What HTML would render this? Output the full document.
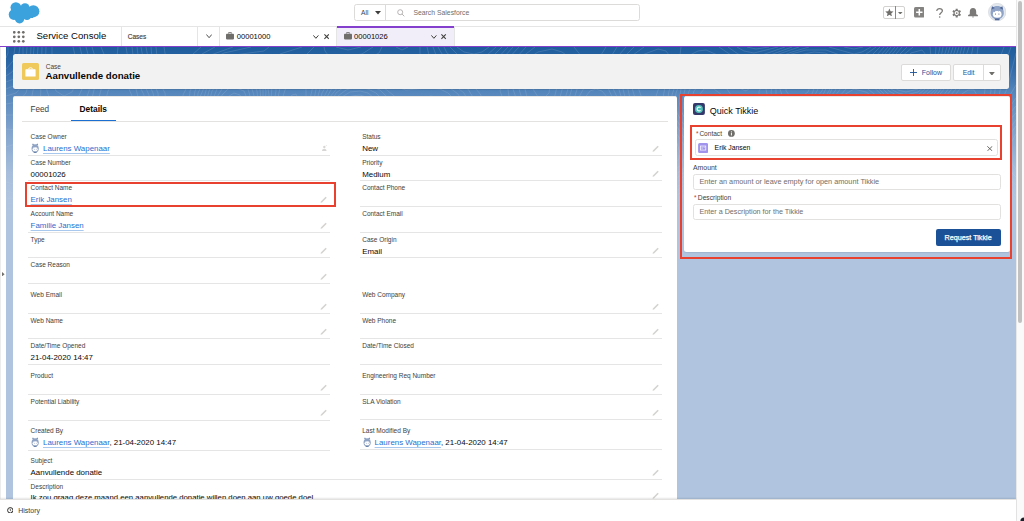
<!DOCTYPE html><html><head><meta charset="utf-8"><style>
html,body{margin:0;padding:0;}
body{width:1024px;height:521px;overflow:hidden;position:relative;background:#fff;font-family:"Liberation Sans",sans-serif;}
.b{position:absolute;}
.t{position:absolute;white-space:nowrap;}
</style></head><body>
<div class="b" style="left:6px;top:47px;width:1010px;height:452px;background:linear-gradient(to bottom,#1e5d9d 0px,#2f69a8 20px,#5586bb 45px,#82a4cd 85px,#a6bddb 125px,#b0c4df 150px,#b0c4df 452px);"></div>
<svg class="b" style="left:6px;top:47px" width="1010" height="220" viewBox="0 0 1010 220"><defs><linearGradient id="cg" x1="0" y1="0" x2="0" y2="1"><stop offset="0" stop-color="#fff" stop-opacity="1"/><stop offset="0.45" stop-color="#fff" stop-opacity="0.6"/><stop offset="1" stop-color="#fff" stop-opacity="0"/></linearGradient><mask id="cm"><rect width="1010" height="220" fill="url(#cg)"/></mask></defs><g mask="url(#cm)" fill="none" stroke="#ffffff" stroke-opacity="0.2" stroke-width="0.7"><path d="M907 28 914 23 919 16 920 8 916 3 905 6 896 17 895 22 898 27 902 29 907 28"/><path d="M792 42 795 40 794 38 791 40 792 42"/><path d="M841 152 846 148 848 142 844 138 836 138 830 144 830 150 834 153 841 152"/><path d="M711 164 718 160 718 155 714 154 708 158 706 162 711 164"/><path d="M907 0 895 10 890 20 892 28 900 34 910 32 920 22 925 10 924 0"/><path d="M795 50 802 45 805 38 803 32 798 30 787 32 780 40 780 44 784 49 790 51 795 50"/><path d="M159 118 160 114 158 113 154 118 156 120 159 118"/><path d="M840 158 850 152 854 144 852 136 842 132 829 136 824 142 822 148 824 154 828 158 840 158"/><path d="M711 172 720 167 728 160 730 154 726 148 720 146 712 147 704 151 697 158 695 164 696 170 702 173 711 172"/><path d="M451 0 458 5 468 7 476 5 483 0"/><path d="M901 0 889 12 886 24 891 34 902 38 912 35 922 25 929 12 930 0"/><path d="M797 54 806 47 810 36 807 28 798 25 790 26 783 30 776 36 774 42 776 48 782 53 790 55 797 54"/><path d="M157 130 166 123 170 114 170 106 164 100 158 101 152 105 144 118 143 124 146 130 152 132 157 130"/><path d="M840 162 854 154 859 144 857 134 851 130 844 128 834 129 826 133 820 140 817 148 819 156 824 161 832 163 840 162"/><path d="M706 178 720 172 732 162 736 152 731 144 722 140 712 142 700 148 690 158 687 166 690 174 696 178 706 178"/><path d="M444 0 452 8 468 12 480 9 490 0"/><path d="M896 0 884 14 882 26 885 32 890 38 902 42 914 37 924 27 931 14 934 0"/><path d="M796 58 808 50 814 38 813 28 804 22 794 22 783 26 775 32 770 40 770 48 776 55 786 59 796 58"/><path d="M157 136 168 127 175 114 175 102 172 96 168 94 160 94 152 99 143 108 138 118 138 128 142 135 148 138 157 136"/><path d="M838 166 854 158 863 146 864 140 862 134 858 130 850 126 838 125 828 128 820 134 814 144 813 154 818 162 826 166 838 166"/><path d="M707 182 726 172 738 160 741 150 738 144 734 140 722 136 710 138 696 146 684 158 681 168 686 178 696 183 707 182"/><path d="M438 0 441 6 448 11 460 15 470 17 484 12 496 0"/><path d="M892 0 881 14 878 26 880 32 886 39 892 43 900 45 912 42 924 31 934 16 937 0"/><path d="M791 62 804 58 816 44 819 36 818 30 815 24 810 20 798 19 786 21 775 28 766 38 765 46 769 54 779 60 791 62"/><path d="M154 142 162 138 170 131 180 114 180 104 178 96 174 90 168 87 160 88 148 97 138 109 133 120 133 130 137 138 146 143 154 142"/><path d="M277 112 282 107 286 98 286 90 284 86 278 91 272 106 272 112 274 114 277 112"/><path d="M833 170 852 163 866 150 868 142 868 136 864 130 859 126 846 122 832 123 820 130 812 140 808 152 812 162 822 169 833 170"/><path d="M705 186 728 174 743 160 745 154 745 148 742 142 735 136 722 132 708 135 691 146 677 160 675 170 682 181 692 187 705 186"/><path d="M250 212 253 206 250 202 246 204 243 210 244 213 250 212"/><path d="M158 0 160 12 164 16 170 18 178 15 195 0"/><path d="M432 0 436 7 444 13 458 19 472 21 480 20 487 16 502 0"/><path d="M889 0 877 14 875 22 875 28 879 36 885 42 892 46 900 48 912 45 926 33 936 16 941 0"/><path d="M797 64 805 60 812 54 818 46 822 36 822 30 820 24 816 20 808 16 794 16 779 22 766 32 760 42 762 52 771 60 784 65 797 64"/><path d="M709 64 716 56 716 48 708 42 698 42 692 50 693 60 700 65 709 64"/><path d="M264 138 282 120 291 104 293 84 291 74 288 67 284 67 278 76 261 116 258 134 260 139 264 138"/><path d="M155 146 164 141 173 132 180 123 184 114 184 104 182 95 176 85 170 81 160 83 148 92 134 108 128 120 129 132 135 142 144 147 155 146"/><path d="M486 104 493 100 496 94 494 88 490 86 486 86 480 90 475 100 478 105 486 104"/><path d="M1010 87 1005 96 1002 106 1004 114 1010 122"/><path d="M391 136 411 128 417 122 417 118 411 114 404 112 392 116 386 122 382 130 384 135 391 136"/><path d="M838 172 860 161 867 154 872 146 873 138 871 132 865 126 858 122 842 119 827 122 814 131 806 144 805 156 812 168 824 173 838 172"/><path d="M704 190 729 176 747 160 750 152 749 146 746 140 738 134 722 128 708 131 688 144 671 160 669 166 669 172 678 184 690 191 704 190"/><path d="M263 220 266 212 264 198 258 183 252 179 246 184 232 203 224 210 214 214 185 220"/><path d="M933 220 928 215 922 214 914 216 909 220"/><path d="M500 220 492 215 486 216 482 220"/><path d="M150 0 151 10 155 18 162 26 168 29 176 26 196 7 209 0"/><path d="M330 0 342 3 355 0"/><path d="M427 0 430 8 438 14 458 23 474 25 482 24 490 19 507 0"/><path d="M885 0 872 16 871 28 875 36 883 44 892 49 900 51 912 48 926 36 938 18 944 0"/><path d="M800 66 808 62 816 54 823 44 826 34 826 28 824 22 818 17 810 14 794 14 777 20 761 32 753 44 753 48 757 54 770 63 786 68 800 66"/><path d="M708 72 716 67 723 60 726 54 725 48 721 42 714 38 706 35 698 36 692 39 688 44 686 50 686 58 688 64 694 70 700 72 708 72"/><path d="M273 220 272 207 264 176 264 164 269 146 290 117 296 102 298 88 296 70 294 55 290 47 286 48 282 54 252 122 248 136 245 166 235 190 227 200 218 206 174 220"/><path d="M592 78 597 72 599 64 596 56 590 52 586 54 582 58 579 70 581 76 584 79 592 78"/><path d="M155 150 166 143 177 132 184 122 188 112 188 102 184 90 178 80 170 74 160 77 146 89 131 106 124 120 125 134 133 146 144 152 155 150"/><path d="M382 148 420 134 448 121 478 115 493 110 504 100 506 94 504 86 499 80 494 76 484 77 476 83 456 106 446 112 436 112 408 105 400 105 392 108 378 120 370 134 370 140 372 145 376 147 382 148"/><path d="M1010 79 1000 93 996 108 1000 120 1010 130"/><path d="M834 176 858 166 868 158 874 150 877 142 876 134 873 128 866 123 848 117 830 118 815 126 804 140 800 154 806 167 818 176 834 176"/><path d="M702 194 736 174 753 158 755 152 753 144 747 136 738 130 722 125 708 127 680 146 663 162 663 172 674 186 688 194 702 194"/><path d="M595 190 602 186 606 180 606 176 603 172 596 169 588 168 581 170 576 174 575 182 580 188 588 191 595 190"/><path d="M507 220 502 211 492 207 482 210 475 220"/><path d="M940 220 934 211 924 208 912 212 903 220"/><path d="M145 0 146 11 151 22 160 34 168 40 174 37 192 17 202 9 227 0"/><path d="M318 0 319 4 322 8 334 10 356 7 367 0"/><path d="M421 0 423 8 432 16 458 26 476 31 484 29 490 25 513 0"/><path d="M882 0 868 16 867 28 871 36 881 46 890 52 900 54 914 50 927 38 941 18 947 0"/><path d="M708 78 718 73 740 53 746 54 764 64 778 69 790 71 802 68 814 60 823 48 830 34 830 24 826 18 820 14 812 11 802 10 788 13 774 19 740 44 710 31 702 30 694 32 688 36 683 44 681 52 682 60 685 68 692 75 700 78 708 78"/><path d="M280 220 271 184 270 166 274 148 294 118 300 102 300 32 298 26 294 24 288 26 282 34 267 80 246 124 243 136 239 168 230 188 222 198 214 203 176 214 166 220"/><path d="M588 88 594 86 600 80 605 66 604 58 601 50 596 44 590 42 584 44 578 52 572 72 576 84 582 88 588 88"/><path d="M149 156 160 152 174 140 185 126 191 114 191 102 187 88 178 72 170 65 162 68 135 96 124 110 120 120 120 132 128 146 138 154 149 156"/><path d="M384 156 412 144 484 120 500 113 508 106 512 99 512 90 509 82 498 71 488 67 480 71 458 94 446 101 434 103 404 99 390 103 370 122 362 138 363 148 368 155 376 158 384 156"/><path d="M1010 73 996 92 990 104 989 112 994 124 1010 138"/><path d="M829 180 856 170 868 162 876 154 881 146 882 138 880 130 874 124 856 116 834 115 818 121 804 134 795 150 798 162 804 171 812 177 820 180 829 180"/><path d="M49 134 53 128 51 122 44 119 38 121 35 126 38 132 44 135 49 134"/><path d="M701 198 743 172 753 164 759 156 760 148 756 140 747 132 736 125 720 120 706 124 663 154 653 164 652 168 655 174 676 192 688 199 701 198"/><path d="M593 198 602 194 612 186 619 176 619 170 610 164 596 161 582 161 572 165 564 174 566 184 578 195 593 198"/><path d="M1010 183 999 194 995 204 999 212 1010 215"/><path d="M512 220 509 212 505 206 500 203 492 201 484 202 478 206 473 212 470 220"/><path d="M946 220 945 214 940 208 934 204 926 202 912 206 899 220"/><path d="M97 220 82 217 66 220"/><path d="M140 0 143 16 159 46 160 56 151 74 119 110 115 118 114 126 118 138 126 150 136 158 146 161 156 158 170 147 186 130 194 116 195 106 193 96 177 56 177 48 183 36 194 21 206 12 218 6 245 0"/><path d="M308 0 300 8 284 15 278 22 267 74 240 128 234 168 226 187 218 196 210 201 170 211 157 220"/><path d="M286 220 275 184 274 164 279 148 297 120 302 108 304 94 304 52 309 30 314 22 320 18 365 10 373 6 376 0"/><path d="M414 0 414 8 423 16 480 38 490 33 520 0"/><path d="M878 0 864 16 861 22 862 28 869 38 880 49 890 55 900 57 914 53 928 41 944 18 950 0"/><path d="M709 84 718 79 734 66 742 63 750 63 784 73 794 73 804 70 816 61 829 44 835 32 835 22 830 16 822 11 804 8 780 14 748 32 740 35 732 34 706 25 692 28 684 34 679 42 677 52 678 62 683 72 692 80 700 84 709 84"/><path d="M59 24 58 19 57 24 58 25 59 24"/><path d="M591 94 598 90 605 82 608 74 610 64 607 52 602 41 594 33 588 31 582 34 574 48 568 64 566 78 568 86 574 93 582 95 591 94"/><path d="M379 166 410 150 453 138 506 115 515 108 519 100 519 90 514 80 498 63 492 59 486 59 478 64 458 87 446 95 432 97 404 94 388 100 364 122 358 132 356 140 357 150 362 160 370 166 379 166"/><path d="M1010 66 1002 75 992 90 983 108 980 118 982 124 1002 140 1010 149"/><path d="M52 144 59 138 64 130 64 122 61 114 54 109 46 107 37 108 29 112 25 116 22 122 23 128 26 134 39 144 46 145 52 144"/><path d="M825 184 854 174 877 158 885 148 889 140 888 132 884 126 866 116 840 112 822 115 806 127 791 146 789 156 795 166 806 178 816 184 825 184"/><path d="M700 202 753 168 762 160 766 154 765 146 757 136 744 126 728 118 716 116 706 119 670 144 642 159 632 161 596 155 578 155 570 157 562 162 556 174 556 182 562 190 574 199 586 203 594 203 602 200 628 180 640 176 654 181 686 203 692 204 700 202"/><path d="M947 138 953 132 952 128 950 126 940 126 933 130 932 134 935 138 940 139 947 138"/><path d="M1010 170 989 194 984 204 985 210 988 214 999 220"/><path d="M516 220 514 209 510 202 502 197 492 195 482 197 474 202 468 210 465 220"/><path d="M953 220 952 212 947 204 938 198 928 196 918 198 910 203 902 210 896 220"/><path d="M405 220 396 213 388 211 380 214 375 220"/><path d="M108 220 96 215 82 213 70 215 58 220"/><path d="M46 0 46 34 50 44 58 49 66 45 72 32 72 20 67 0"/><path d="M135 0 138 16 152 46 153 60 143 78 114 110 110 118 109 124 113 138 124 153 136 163 146 166 156 163 168 153 189 132 197 118 199 110 197 100 183 56 184 44 192 30 202 19 214 12 228 8 258 4 263 0"/><path d="M296 0 274 7 270 10 270 44 266 66 257 90 236 126 231 166 224 184 217 192 208 198 196 202 162 208 152 214 146 220"/><path d="M402 0 396 3 390 0"/><path d="M291 220 280 186 278 164 283 148 301 122 305 112 307 98 308 52 311 38 318 28 324 23 334 20 374 14 394 9 457 34 470 42 475 48 475 56 468 68 459 80 450 87 436 92 408 89 396 91 380 101 357 124 351 138 352 154 364 171 372 177 378 177 410 156 458 143 508 120 522 110 527 100 526 90 519 78 497 52 494 44 497 34 505 22 516 10 529 0"/><path d="M568 0 576 10 578 20 563 68 560 86 562 92 566 98 572 101 580 103 590 101 600 95 608 84 613 72 614 62 611 50 595 16 595 8 600 0"/><path d="M874 0 856 18 853 22 853 26 880 52 892 59 902 61 916 55 930 42 947 18 953 0"/><path d="M714 90 734 73 744 68 754 69 786 76 796 76 806 73 814 67 824 56 843 30 845 24 840 18 829 10 819 6 808 5 784 10 742 29 732 29 706 21 698 21 690 24 682 30 675 42 673 54 675 64 682 77 694 87 704 92 714 90"/><path d="M1010 59 1000 71 980 101 972 109 962 114 928 118 915 126 909 134 924 148 938 153 950 151 972 138 978 137 986 138 996 145 1002 154 1003 162 999 172 974 197 966 202 936 190 928 189 918 192 904 203 892 220"/><path d="M55 150 66 140 73 126 73 116 66 105 56 99 44 97 26 102 14 110 10 116 9 122 13 130 20 138 38 150 46 152 55 150"/><path d="M696 208 740 179 776 158 784 162 804 182 812 187 822 188 834 185 858 175 876 164 893 148 902 134 891 124 872 114 852 110 834 109 824 111 814 116 786 142 778 146 772 143 738 118 724 111 714 109 706 112 674 138 652 149 630 153 588 148 572 149 557 156 551 164 548 172 548 182 553 190 568 201 584 208 592 209 600 207 628 187 642 183 658 188 686 208 696 208"/><path d="M520 220 519 206 515 198 506 192 492 190 480 192 471 198 464 208 460 220"/><path d="M412 220 398 207 384 201 376 206 369 220"/><path d="M120 220 102 213 80 209 66 212 51 220"/><path d="M962 220 970 215 983 220"/><path d="M40 0 39 30 41 44 46 58 52 64 56 66 62 64 68 59 77 40 79 22 74 0"/><path d="M131 0 133 16 147 46 149 54 147 62 138 79 104 112 100 122 105 134 122 156 134 168 144 172 152 171 162 164 193 132 201 120 202 104 189 68 187 56 189 44 196 30 210 17 228 11 250 12 258 15 262 20 266 40 264 64 254 90 230 126 228 160 225 174 214 190 198 198 158 202 130 213 90 206 72 206 60 210 44 220"/><path d="M419 220 396 196 392 188 392 182 395 176 407 164 422 158 456 150 486 135 517 122 533 112 544 98 564 109 576 111 590 108 604 97 613 84 618 68 616 52 605 18 606 8 611 0"/><path d="M870 0 856 10 848 13 820 3 800 3 782 8 742 25 732 24 704 16 696 16 688 19 680 26 674 35 670 46 669 56 671 66 676 75 700 102 699 108 692 118 670 136 644 146 622 147 578 140 562 142 554 147 546 157 539 172 537 184 539 190 545 194 574 209 586 213 600 212 628 192 644 188 660 194 686 215 692 216 734 185 770 166 778 166 784 169 808 191 818 194 864 175 898 154 910 153 922 160 935 172 904 197 889 220"/><path d="M1010 51 982 91 970 103 960 107 928 111 904 118 894 117 856 108 830 107 814 112 786 135 776 137 766 133 733 110 722 100 722 94 727 86 736 78 744 74 756 73 788 79 798 79 806 76 818 67 840 42 848 37 858 39 880 56 892 62 902 64 910 62 924 52 940 32 952 14 956 0"/><path d="M544 96 510 60 503 50 502 42 506 28 518 14 532 5 546 2 556 5 563 10 568 18 569 26 567 38 561 58 550 86 544 96"/><path d="M296 220 284 188 282 166 286 150 304 124 309 114 310 102 310 56 314 42 320 32 328 26 338 22 376 20 418 25 450 35 462 42 468 52 465 64 455 78 447 84 438 87 406 85 392 88 380 97 360 116 347 132 345 144 348 156 369 192 369 202 364 220"/><path d="M0 135 8 137 36 155 44 157 52 157 60 154 71 144 83 128 86 120 83 112 72 98 62 88 54 83 0 100"/><path d="M968 186 960 187 953 184 942 176 940 172 970 151 978 148 986 150 992 158 990 168 980 180 968 186"/><path d="M524 220 526 200 524 193 512 187 492 185 478 187 468 193 460 204 454 220"/><path d="M819 220 812 216 803 220"/><path d="M36 0 34 70 30 76 22 81 12 83 0 82"/><path d="M126 0 128 16 143 48 143 62 137 74 126 87 108 100 96 104 90 103 82 95 76 86 73 78 74 68 83 44 85 30 85 18 80 0"/><path d="M803 0 786 5 744 21 732 20 702 11 692 12 684 16 676 25 670 36 666 48 666 58 671 74 691 100 691 110 683 122 668 133 652 140 634 142 618 141 602 137 591 132 586 126 588 120 610 97 620 76 621 58 611 18 613 8 620 0"/><path d="M865 0 856 5 848 7 823 0"/><path d="M1010 38 980 88 970 97 958 102 924 105 896 110 848 104 826 104 814 108 790 127 778 132 770 130 758 123 738 108 732 100 731 94 734 87 740 81 748 78 758 78 790 83 806 80 816 73 838 48 848 42 860 45 894 67 902 68 910 67 924 56 945 30 955 14 959 0"/><path d="M544 76 536 77 524 69 511 54 507 42 510 32 518 20 528 13 540 9 548 10 556 14 561 22 563 30 562 42 557 58 550 70 544 76"/><path d="M0 144 12 147 38 161 50 163 62 159 86 138 94 136 104 142 138 179 146 183 150 182 203 128 207 120 207 108 194 74 191 60 192 46 199 32 212 20 232 15 250 17 256 21 260 28 263 48 260 70 248 94 224 124 223 166 219 178 212 187 200 194 186 196 170 196 150 191 132 202 122 205 68 202 56 207 36 220"/><path d="M300 220 287 188 285 166 291 150 308 126 312 118 313 106 313 60 316 46 322 36 328 30 336 27 360 24 426 31 448 38 458 46 462 54 459 66 451 76 444 81 436 83 406 80 394 83 382 91 354 116 342 130 340 140 342 152 362 196 362 206 359 220"/><path d="M426 220 409 200 403 190 403 180 410 170 424 163 458 158 488 140 508 132 534 126 545 128 546 132 544 140 533 166 526 175 516 180 484 179 470 182 464 187 458 195 447 220"/><path d="M825 220 819 206 821 202 828 196 890 166 898 163 906 164 912 170 912 176 894 204 886 220"/><path d="M700 220 711 206 730 190 756 175 772 171 780 172 788 177 799 188 807 200 807 208 797 220"/><path d="M528 220 533 208 540 202 552 204 582 217 594 219 604 215 630 196 644 193 654 195 664 201 674 210 680 220"/><path d="M32 0 30 28 24 59 20 65 14 68 0 68"/><path d="M120 0 123 18 138 48 138 62 134 72 124 84 112 92 100 95 89 90 85 84 83 76 83 64 92 26 91 16 86 0"/><path d="M793 0 744 17 730 16 700 3 692 4 684 8 675 18 667 32 663 44 661 56 666 72 684 100 686 106 685 112 677 122 666 130 652 136 636 138 612 133 605 128 602 122 605 114 620 88 625 72 625 56 617 20 620 8 628 0"/><path d="M857 0 848 2 838 0"/><path d="M1010 6 1001 42 989 68 975 88 960 97 946 99 916 99 886 104 822 101 810 105 788 123 778 126 770 125 758 118 745 108 739 100 740 90 746 85 752 82 762 82 794 87 808 84 816 78 838 53 850 47 862 50 894 72 902 74 910 72 922 62 951 26 959 12 963 0"/><path d="M540 69 532 68 524 62 516 52 513 42 515 32 521 24 530 17 540 15 548 17 554 22 557 28 558 36 552 57 546 65 540 69"/><path d="M224 112 220 113 216 112 206 96 195 68 194 50 200 36 210 25 224 19 240 19 250 23 257 32 260 44 259 60 255 76 248 90 236 104 224 112"/><path d="M305 220 292 190 289 168 295 150 314 128 317 122 318 112 315 66 317 52 323 40 336 30 356 27 372 29 398 35 430 37 444 41 452 47 456 54 454 64 448 72 442 76 434 78 406 75 394 78 341 122 335 130 334 138 336 150 355 196 356 208 355 220"/><path d="M190 192 178 192 169 188 165 182 165 176 174 162 188 147 202 136 212 133 217 138 220 149 220 162 218 172 213 180 207 186 200 190 190 192"/><path d="M508 172 482 170 475 166 475 162 482 152 496 143 512 138 524 140 528 144 529 148 526 160 518 169 508 172"/><path d="M0 151 12 152 40 167 52 170 62 166 84 147 90 145 96 145 104 149 112 157 124 172 129 182 128 191 120 197 106 200 74 197 64 197 56 201 36 216 24 220"/><path d="M436 212 428 209 418 199 413 190 412 182 418 174 426 170 438 169 450 171 455 176 454 184 444 206 440 211 436 212"/><path d="M830 220 827 212 827 206 835 196 849 188 870 179 886 174 894 174 899 178 898 184 883 220"/><path d="M705 220 714 206 732 191 754 179 772 174 780 176 786 180 799 196 800 206 793 220"/><path d="M605 220 628 201 644 197 654 199 662 204 670 212 674 220"/><path d="M533 220 538 212 548 209 560 211 578 220"/><path d="M28 0 26 24 20 46 12 55 0 57"/><path d="M112 0 111 10 113 16 130 42 134 58 131 68 124 78 114 85 104 87 94 82 90 72 91 58 101 20 100 12 95 0"/><path d="M675 0 674 8 659 40 656 56 661 72 678 98 679 110 675 118 665 126 654 131 640 133 630 132 620 129 614 124 612 118 615 108 627 80 631 66 630 54 622 28 622 18 627 8 638 0"/><path d="M786 0 756 11 742 13 728 10 713 0"/><path d="M1005 0 1000 14 992 54 983 72 974 84 962 92 950 95 932 94 914 88 911 86 912 82 959 20 965 10 967 0"/><path d="M228 104 218 104 210 96 199 72 197 54 201 40 209 30 220 23 234 21 244 24 252 30 257 42 257 56 255 70 248 85 238 97 228 104"/><path d="M540 60 534 61 526 56 521 50 519 42 520 35 524 29 530 24 536 22 542 22 548 26 552 36 548 52 540 60"/><path d="M334 119 328 118 324 112 319 94 317 74 318 60 321 50 326 41 334 35 346 31 362 31 400 43 422 41 434 42 442 46 448 52 449 62 442 70 430 73 406 68 398 69 388 76 358 104 334 119"/><path d="M886 98 872 100 850 99 822 95 814 92 823 76 836 59 846 52 854 51 868 58 903 86 902 90 897 94 886 98"/><path d="M782 120 770 120 756 111 747 100 748 92 754 88 766 87 798 93 806 96 803 102 795 112 782 120"/><path d="M310 220 295 190 293 178 293 168 296 157 302 148 312 139 320 136 324 138 328 144 348 190 351 204 349 220"/><path d="M198 186 188 188 179 186 174 182 173 174 177 164 188 151 200 143 208 142 212 145 215 150 215 166 210 178 198 186"/><path d="M0 157 6 156 14 158 44 175 56 179 62 177 82 156 90 152 96 152 104 156 112 164 118 174 120 182 116 190 106 194 92 194 60 189 38 209 24 216 12 216 0 212"/><path d="M506 160 500 160 498 156 502 152 510 152 511 156 506 160"/><path d="M709 220 717 206 734 192 754 181 770 178 782 182 793 194 795 206 790 220"/><path d="M834 220 833 208 840 197 861 186 882 181 888 184 889 190 879 220"/><path d="M434 192 430 192 428 190 428 187 430 185 435 186 434 192"/><path d="M613 220 628 206 636 202 644 201 652 202 660 207 666 214 669 220"/><path d="M539 220 544 215 550 214 569 220"/><path d="M25 0 24 18 18 37 10 46 0 49"/><path d="M779 0 756 8 744 10 732 7 722 0"/><path d="M998 0 992 16 988 52 983 64 976 76 966 85 956 90 944 90 932 87 927 84 925 80 927 70 940 49 967 16 971 8 972 0"/><path d="M654 126 642 128 631 126 624 122 621 114 622 104 639 62 637 54 629 32 629 18 636 8 652 2 660 4 663 8 663 12 649 52 649 60 653 70 671 96 674 106 673 112 668 118 654 126"/><path d="M230 98 220 99 212 92 203 74 200 56 203 44 210 33 220 27 232 25 242 27 248 32 254 42 255 54 253 68 248 80 240 91 230 98"/><path d="M538 51 532 50 527 42 530 34 536 31 542 33 544 38 543 46 538 51"/><path d="M340 110 334 111 329 108 322 93 320 70 324 50 332 40 346 34 362 34 377 40 392 52 394 56 393 62 366 94 352 105 340 110"/><path d="M112 78 106 78 102 76 98 70 97 64 102 44 106 38 112 35 118 37 123 42 129 56 128 62 124 70 112 78"/><path d="M436 64 430 66 422 64 415 58 415 54 424 49 434 50 440 56 440 60 436 64"/><path d="M868 96 839 94 830 91 826 88 825 84 828 76 834 66 842 59 850 55 860 57 873 66 884 78 887 84 885 90 879 94 868 96"/><path d="M780 114 772 114 762 108 757 102 758 96 762 94 770 93 788 98 791 102 790 106 786 111 780 114"/><path d="M316 220 301 194 297 174 298 164 302 156 308 150 316 147 322 150 326 154 341 186 345 204 343 220"/><path d="M194 182 183 180 180 176 180 170 190 156 198 150 204 150 208 152 210 156 210 168 204 177 194 182"/><path d="M100 188 84 186 77 180 76 176 78 170 88 161 94 160 100 162 109 172 111 178 110 182 107 186 100 188"/><path d="M0 162 10 162 24 168 40 180 44 190 38 202 26 211 14 212 0 208"/><path d="M712 220 719 208 734 194 752 185 768 181 780 185 790 196 792 206 787 220"/><path d="M839 220 837 210 843 200 856 192 872 188 878 189 882 194 881 204 875 220"/><path d="M619 220 632 208 644 205 656 209 664 220"/><path d="M21 0 20 16 16 29 10 38 0 42"/><path d="M772 0 748 6 738 4 731 0"/><path d="M644 37 638 33 636 23 640 16 648 13 652 16 653 22 650 30 644 37"/><path d="M958 84 946 86 936 82 932 76 933 68 940 54 954 37 970 23 978 21 982 25 984 34 985 44 982 56 972 75 958 84"/><path d="M228 94 220 93 212 86 205 70 203 56 206 44 212 36 222 30 232 28 240 30 247 36 251 44 252 56 250 68 244 81 236 90 228 94"/><path d="M344 104 334 104 326 94 322 76 324 58 330 46 338 40 350 37 364 39 374 43 381 50 384 56 384 64 378 76 366 90 354 99 344 104"/><path d="M116 65 112 66 108 62 110 54 114 51 119 56 119 60 116 65"/><path d="M862 92 842 90 836 88 832 84 834 74 844 62 852 60 860 62 869 68 876 76 878 82 876 87 872 90 862 92"/><path d="M646 122 638 121 632 118 629 114 628 108 636 87 642 80 646 78 652 80 660 88 666 98 668 106 662 116 656 120 646 122"/><path d="M332 219 326 218 318 211 310 200 304 186 302 176 303 168 306 161 312 157 318 157 324 163 335 188 338 208 336 215 332 219"/><path d="M196 174 190 173 189 168 194 161 200 159 203 162 203 166 200 172 196 174"/><path d="M0 168 8 167 20 171 31 180 36 190 32 200 24 206 12 208 0 203"/><path d="M715 220 722 208 735 196 752 187 766 184 778 188 786 196 788 206 784 220"/><path d="M844 220 842 212 846 204 854 197 866 194 872 195 875 200 875 208 871 220"/><path d="M625 220 634 212 644 210 652 212 658 220"/><path d="M17 0 17 12 13 24 8 32 0 35"/><path d="M763 0 750 2 741 0"/><path d="M232 88 224 90 216 85 209 74 206 62 207 52 211 42 218 35 228 32 236 33 242 36 246 42 249 52 248 64 245 74 239 82 232 88"/><path d="M956 80 946 80 940 76 938 71 939 64 944 54 954 42 964 35 972 33 976 35 979 42 977 58 968 73 956 80"/><path d="M342 100 334 98 327 88 325 72 327 58 332 49 340 43 350 40 362 42 370 46 376 52 378 60 377 68 372 78 362 89 352 97 342 100"/><path d="M864 86 854 88 844 85 839 80 840 74 848 66 854 65 860 67 866 72 869 78 869 82 864 86"/><path d="M648 114 640 112 637 104 641 94 648 90 656 95 659 104 656 111 648 114"/><path d="M324 200 316 195 310 184 310 174 314 170 320 173 326 184 327 196 324 200"/><path d="M0 176 8 173 16 175 25 182 28 190 25 198 18 202 8 202 0 196"/><path d="M718 220 725 208 735 198 750 190 764 187 775 190 783 198 785 208 782 220"/><path d="M850 220 849 214 850 208 856 203 862 201 866 202 868 206 868 212 865 220"/><path d="M633 220 642 216 650 220"/><path d="M14 0 11 18 6 25 0 29"/><path d="M230 84 222 84 216 79 211 70 209 60 211 50 216 42 222 37 230 36 236 37 242 42 246 56 245 66 241 74 236 81 230 84"/><path d="M954 74 948 73 946 70 946 60 956 47 962 43 968 43 972 50 970 62 964 70 954 74"/><path d="M348 94 340 95 333 90 329 80 328 68 330 58 336 50 344 45 354 44 362 46 368 51 372 56 373 64 371 72 364 82 356 90 348 94"/><path d="M12 194 5 190 5 186 8 182 14 183 18 188 17 192 12 194"/><path d="M721 220 726 210 736 200 750 192 762 190 772 192 779 198 782 208 779 220"/><path d="M9 0 7 14 0 22"/><path d="M232 78 226 80 220 77 215 70 213 62 216 48 222 42 228 40 238 44 242 54 240 68 232 78"/><path d="M346 90 340 89 334 84 332 76 332 66 334 58 339 52 346 49 354 48 360 50 366 56 368 62 368 68 360 82 352 88 346 90"/><path d="M724 220 729 210 737 202 748 196 760 193 770 195 776 200 778 208 777 220"/><path d="M2 0 2 6 0 11"/><path d="M230 73 226 73 222 71 218 62 220 51 228 46 234 48 238 56 236 66 230 73"/><path d="M348 84 342 84 338 81 335 68 338 60 342 56 352 53 360 58 363 68 357 78 348 84"/><path d="M726 220 732 210 740 202 750 197 760 196 768 198 773 202 775 210 774 220"/><path d="M228 62 226 60 228 57 229 60 228 62"/><path d="M348 77 342 74 341 68 344 63 350 60 354 62 356 68 353 74 348 77"/><path d="M729 220 733 212 740 205 750 200 758 199 765 200 770 205 772 212 771 220"/><path d="M732 220 741 208 748 204 756 202 762 203 766 206 769 212 768 220"/><path d="M736 220 743 210 754 206 760 207 763 210 765 220"/><path d="M740 220 746 213 754 210 760 214 760 220"/></g></svg>
<div class="b" style="left:0px;top:47px;width:6px;height:452px;background:#fff;border-left:1px solid #ececec;box-sizing:border-box;"></div>
<svg class="b" style="left:2px;top:272px" width="2.6" height="4.4" viewBox="0 0 2.6 4.4"><path d="M0 0L2.6 2.2 0 4.4z" fill="#706e6b"/></svg>
<div class="b" style="left:0px;top:0px;width:1016px;height:26px;background:#fff;"></div>
<div class="b" style="left:0px;top:26px;width:1016px;height:1px;background:#e5e5e5;"></div>
<div class="b" style="left:0px;top:27px;width:1016px;height:19px;background:#fff;"></div>
<div class="b" style="left:0px;top:45.8px;width:1016px;height:1.7px;background:#8440cc;"></div>
<div class="b" style="left:1016px;top:0px;width:8px;height:521px;background:#fafafa;border-left:1px solid #e8e8e8;box-sizing:border-box;"></div>
<div class="b" style="left:1018px;top:1px;width:4.2px;height:322px;background:#c1c1c1;border-radius:3px;"></div>
<svg class="b" style="left:0;top:0" width="50" height="26" viewBox="0 0 50 26"><g fill="#3ba2de">
<circle cx="15.9" cy="7.6" r="5.4"/><circle cx="25" cy="7.8" r="4.6"/><circle cx="33.3" cy="11.3" r="6.1"/>
<circle cx="14" cy="14.6" r="5.3"/><circle cx="19.6" cy="18.6" r="4.8"/><circle cx="27" cy="15.8" r="4.3"/>
<rect x="14" y="8" width="19" height="10"/></g></svg>
<div class="b" style="left:354.3px;top:4.4px;width:285.7px;height:16.8px;border:1px solid #dddbda;border-radius:2.5px;box-sizing:border-box;background:#fff;"></div>
<div class="b" style="left:385.3px;top:4.9px;width:0.8px;height:15.8px;background:#dddbda;"></div>
<div class="t" style="left:361.10px;top:9.00px;font-size:6.6px;line-height:8.58px;color:#3e3e3c;">All</div>
<svg class="b" style="left:374.5px;top:11.4px" width="6" height="3.6" viewBox="0 0 6 3.6"><path d="M0 0H6L3 3.6Z" fill="#3e3e3c"/></svg>
<svg class="b" style="left:396.5px;top:9.3px" width="8" height="8" viewBox="0 0 8 8"><circle cx="3.2" cy="3.2" r="2.5" fill="none" stroke="#b0adab" stroke-width="0.9"/><path d="M5 5L7.3 7.3" stroke="#b0adab" stroke-width="0.9"/></svg>
<div class="t" style="left:413.40px;top:9.00px;font-size:6.85px;line-height:8.9px;color:#706e6b;">Search Salesforce</div>
<div class="b" style="left:882.5px;top:6.2px;width:22.3px;height:12.7px;border:1px solid #d4d2d0;border-radius:2px;box-sizing:border-box;background:#fff;"></div>
<div class="b" style="left:895.3px;top:6.2px;width:0.9px;height:12.7px;background:#8a8886;"></div>
<svg class="b" style="left:884.9px;top:7.7px" width="8.8" height="8.8" viewBox="0 0 24 24"><path d="M12 1.5l3.1 7.6 8.2.6-6.3 5.3 2 8-7-4.4-7 4.4 2-8L.7 9.7l8.2-.6z" fill="#706e6b"/></svg>
<svg class="b" style="left:898px;top:11.5px" width="4.5" height="2.6" viewBox="0 0 6 3.4"><path d="M0 0H6L3 3.4Z" fill="#706e6b"/></svg>
<svg class="b" style="left:913.6px;top:7.4px" width="10.6" height="10.5" viewBox="0 0 10.6 10.5"><rect width="10.6" height="10.5" rx="1.6" fill="#858381"/><path d="M5.3 2.1V8.4M2.1 5.25H8.5" stroke="#fff" stroke-width="1.5"/></svg>
<svg class="b" style="left:935.6px;top:7.8px" width="7.2" height="10" viewBox="0 0 7.2 10"><path d="M0.8 2.9C0.8 1.5 2 0.65 3.6 0.65S6.4 1.6 6.4 2.9C6.4 4.6 3.7 4.8 3.7 6.9" fill="none" stroke="#7b7977" stroke-width="1.25"/><circle cx="3.7" cy="9.0" r="0.8" fill="#7b7977"/></svg>
<svg class="b" style="left:951.7px;top:8.0px" width="9.4" height="10.2" viewBox="0 0 24 24"><path fill="#7b7977" d="M7.90 4.90 L9.33 4.25 L9.41 0.79 L14.59 0.79 L14.67 4.25 L16.10 4.90 L17.38 5.81 L20.41 4.16 L23.00 8.64 L20.05 10.44 L20.20 12.00 L20.05 13.56 L23.00 15.36 L20.41 19.84 L17.38 18.19 L16.10 19.10 L14.67 19.75 L14.59 23.21 L9.41 23.21 L9.33 19.75 L7.90 19.10 L6.62 18.19 L3.59 19.84 L1.00 15.36 L3.95 13.56 L3.80 12.00 L3.95 10.44 L1.00 8.64 L3.59 4.16 L6.62 5.81Z"/><circle cx="12" cy="12" r="5.4" fill="#fff"/><circle cx="12" cy="12" r="2.3" fill="#7b7977"/></svg>
<svg class="b" style="left:968.2px;top:7.7px" width="10" height="10" viewBox="0 0 20 20"><path fill="#7b7977" d="M10 0.2C14.4 0.2 16.4 3.2 16.4 7.4V12.4L19.8 13.8V16.3H0.2V13.8L3.6 12.4V7.4C3.6 3.2 5.6 0.2 10 0.2z"/><path fill="#7b7977" d="M8.4 17h3.2c0 1.3-.7 2.2-1.6 2.2s-1.6-.9-1.6-2.2z"/></svg>
<svg class="b" style="left:987.6px;top:3.0px" width="18.4" height="18.2" viewBox="0 0 40 40"><circle cx="20" cy="20" r="19.3" fill="#e3e8ef" stroke="#cfd3d8" stroke-width="1.3"/><path d="M5.5 22C5.5 12 11 6.5 20 6.5S34.5 12 34.5 22c0 8-6 13.5-14.5 13.5S5.5 30 5.5 22z" fill="#8ea3c6"/><path d="M7 15l1.5-8 6.5 4zM33 15l-1.5-8-6.5 4z" fill="#50699a"/><ellipse cx="20" cy="24.5" rx="9.5" ry="7.8" fill="#fff"/><path d="M13 19.5c3-3.5 8-4 11-1.5" stroke="#8ea3c6" stroke-width="2.4" fill="none"/><circle cx="16.2" cy="24.3" r="1.2" fill="#3f5580"/><circle cx="23.8" cy="24.3" r="1.2" fill="#3f5580"/><path d="M14 34h12l-1.5 4h-9z" fill="#50699a"/></svg>
<svg class="b" style="left:12.6px;top:31.1px" width="12" height="12" viewBox="0 0 12 12"><g fill="#706e6b"><circle cx="1.3" cy="1.3" r="1.35"/><circle cx="1.3" cy="5.8" r="1.35"/><circle cx="1.3" cy="10.3" r="1.35"/><circle cx="5.8" cy="1.3" r="1.35"/><circle cx="5.8" cy="5.8" r="1.35"/><circle cx="5.8" cy="10.3" r="1.35"/><circle cx="10.3" cy="1.3" r="1.35"/><circle cx="10.3" cy="5.8" r="1.35"/><circle cx="10.3" cy="10.3" r="1.35"/></g></svg>
<div class="t" style="left:36.40px;top:30.00px;font-size:9.6px;line-height:12.48px;color:#080707;">Service Console</div>
<div class="b" style="left:121.2px;top:27px;width:0.8px;height:18.6px;background:#e5e5e5;"></div>
<div class="t" style="left:127.80px;top:33.00px;font-size:6.5px;line-height:8.45px;color:#3e3e3c;font-weight:400;-webkit-text-stroke:0.15px #3e3e3c;">Cases</div>
<div class="b" style="left:197.2px;top:27px;width:0.8px;height:18.6px;background:#e5e5e5;"></div>
<svg class="b" style="left:205.6px;top:34.2px" width="6.2" height="4.4" viewBox="0 0 6.2 4.4"><path d="M0.4 0.5L3.1 3.7 5.8 0.5" fill="none" stroke="#3e3e3c" stroke-width="0.9"/></svg>
<div class="b" style="left:219.4px;top:27px;width:0.8px;height:18.6px;background:#e5e5e5;"></div>
<svg class="b" style="left:226.1px;top:32.3px" width="8" height="7.4" viewBox="0 0 8 7.4"><path d="M2.6 1.6V0.6h2.8v1" fill="none" stroke="#706e6b" stroke-width="0.9"/><rect x="0" y="1.7" width="8" height="5.7" rx="0.8" fill="#706e6b"/></svg>
<div class="t" style="left:236.80px;top:32.00px;font-size:7.55px;line-height:9.81px;color:#080707;">00001000</div>
<svg class="b" style="left:313.2px;top:35px" width="5.8" height="3.8" viewBox="0 0 5.8 3.8"><path d="M0.4 0.4L2.9 3.3 5.4 0.4" fill="none" stroke="#3e3e3c" stroke-width="1"/></svg>
<svg class="b" style="left:324.2px;top:34.4px" width="5.2" height="5.2" viewBox="0 0 5.2 5.2"><path d="M0.4 0.4L4.8 4.8M4.8 0.4L0.4 4.8" stroke="#3e3e3c" stroke-width="1.05"/></svg>
<div class="b" style="left:336.3px;top:27px;width:1px;height:18.6px;background:#e5e5e5;"></div>
<div class="b" style="left:336.5px;top:26.4px;width:117.7px;height:19.4px;background:#f1edf9;"></div>
<div class="b" style="left:336.5px;top:26.4px;width:117.7px;height:1.6px;background:#8440cc;"></div>
<svg class="b" style="left:343.6px;top:32.3px" width="8" height="7.4" viewBox="0 0 8 7.4"><path d="M2.6 1.6V0.6h2.8v1" fill="none" stroke="#706e6b" stroke-width="0.9"/><rect x="0" y="1.7" width="8" height="5.7" rx="0.8" fill="#706e6b"/></svg>
<div class="t" style="left:354.00px;top:32.00px;font-size:7.6px;line-height:9.88px;color:#080707;">00001026</div>
<svg class="b" style="left:430.8px;top:35px" width="5.8" height="3.8" viewBox="0 0 5.8 3.8"><path d="M0.4 0.4L2.9 3.3 5.4 0.4" fill="none" stroke="#3e3e3c" stroke-width="1"/></svg>
<svg class="b" style="left:441.4px;top:34.4px" width="5.2" height="5.2" viewBox="0 0 5.2 5.2"><path d="M0.4 0.4L4.8 4.8M4.8 0.4L0.4 4.8" stroke="#3e3e3c" stroke-width="1.05"/></svg>
<div class="b" style="left:454.2px;top:27px;width:0.8px;height:18.6px;background:#e5e5e5;"></div>
<div class="b" style="left:13px;top:54px;width:996.3px;height:34.6px;background:#f3f2f2;border-radius:2.5px;box-shadow:0 0.5px 1px rgba(0,0,0,0.1);"></div>
<svg class="b" style="left:22px;top:63px" width="17" height="17" viewBox="0 0 17 17"><rect width="17" height="17" rx="1.5" fill="#f0c95c"/><path d="M6.4 6.2C6.4 4.3 10.6 4.3 10.6 6.2" fill="none" stroke="#fff" stroke-width="0.9"/><rect x="3.4" y="6.2" width="10.2" height="7.4" rx="0.7" fill="#fff"/></svg>
<div class="t" style="left:45.80px;top:63.00px;font-size:6.5px;line-height:8.45px;color:#3e3e3c;">Case</div>
<div class="t" style="left:45.50px;top:70.00px;font-size:9.7px;line-height:12.61px;color:#080707;font-weight:700;">Aanvullende donatie</div>
<div class="b" style="left:901.2px;top:64.4px;width:50.2px;height:16.4px;background:#fff;border:0.8px solid #dddbda;border-radius:2px;box-sizing:border-box;"></div>
<svg class="b" style="left:910px;top:68.6px" width="7" height="7" viewBox="0 0 7 7"><path d="M3.5 0V7M0 3.5H7" stroke="#1b5297" stroke-width="0.9"/></svg>
<div class="t" style="left:921.80px;top:68.00px;font-size:7.0px;line-height:9.1px;color:#1b5297;">Follow</div>
<div class="b" style="left:953.4px;top:64.4px;width:47.2px;height:16.4px;background:#fff;border:0.8px solid #dddbda;border-radius:2px;box-sizing:border-box;"></div>
<div class="b" style="left:983.4px;top:64.4px;width:0.8px;height:16.4px;background:#dddbda;"></div>
<div class="t" style="left:962.70px;top:69.00px;font-size:6.8px;line-height:8.84px;color:#1b5297;">Edit</div>
<svg class="b" style="left:989.4px;top:71.8px" width="5.8" height="3.7" viewBox="0 0 5.8 3.7"><path d="M0 0H5.8L2.9 3.7Z" fill="#706e6b"/></svg>
<div class="b" style="left:13px;top:96px;width:664.3px;height:403px;background:#fff;border-radius:2.5px 2.5px 0 0;box-shadow:inset 0 0.8px 0 #e3e2e1;"></div>
<div class="t" style="left:30.50px;top:105.00px;font-size:8.2px;line-height:10.66px;color:#3e3e3c;">Feed</div>
<div class="t" style="left:79.50px;top:104.00px;font-size:8.4px;line-height:10.92px;color:#080707;font-weight:700;">Details</div>
<div class="b" style="left:22px;top:121.2px;width:646px;height:0.8px;background:#e3e2e1;"></div>
<div class="b" style="left:71.1px;top:119.6px;width:45.1px;height:1.7px;background:#1b6fd0;"></div>
<div class="t" style="left:30.60px;top:133.00px;font-size:6.5px;line-height:8.45px;color:#3e3e3c;">Case Owner</div>
<svg class="b" style="left:31.200000000000003px;top:143.0px" width="8.3" height="10.6" viewBox="0 0 32 41"><path d="M4 9l3-7 6 4zM28 9l-3-7-6 4z" fill="#6d86ad"/><path d="M2 22C2 11 8 5 16 5s14 6 14 17c0 9-5 15-14 15S2 31 2 22z" fill="#8fa3c4"/><ellipse cx="16" cy="24" rx="10" ry="8.5" fill="#fff"/><path d="M9 19c3-4 8-5 12-3" stroke="#8fa3c4" stroke-width="2.5" fill="none"/><circle cx="12.5" cy="24" r="1.3" fill="#4a5f85"/><circle cx="20" cy="24" r="1.3" fill="#4a5f85"/><rect x="10" y="34" width="12" height="5" rx="2.5" fill="#6d86ad"/></svg>
<div class="t" style="left:43.00px;top:144.00px;font-size:7.9px;line-height:10.27px;color:#1f6fd0;"><span style="text-decoration:underline;text-decoration-color:#a9c8ee;text-underline-offset:1.6px;text-decoration-thickness:0.7px;">Laurens Wapenaar</span></div>
<div class="b" style="left:28.3px;top:155.1px;width:302.09999999999997px;height:0.8px;background:#e5e5e5;"></div>
<svg class="b" style="left:320.6px;top:144.8px" width="6.6" height="6.6" viewBox="0 0 10 10"><circle cx="5" cy="3" r="1.8" fill="#d8d6d4"/><path d="M1.5 9.5c0-2.5 1.5-3.8 3.5-3.8s3.5 1.3 3.5 3.8z" fill="#d8d6d4"/><path d="M7 1.5l2-1" stroke="#d8d6d4" stroke-width="0.8"/></svg>
<div class="t" style="left:30.60px;top:159.00px;font-size:6.5px;line-height:8.45px;color:#3e3e3c;">Case Number</div>
<div class="t" style="left:30.60px;top:170.00px;font-size:7.9px;line-height:10.27px;color:#080707;">00001026</div>
<div class="b" style="left:28.3px;top:180.4px;width:302.09999999999997px;height:0.8px;background:#e5e5e5;"></div>
<div class="t" style="left:30.60px;top:184.00px;font-size:6.5px;line-height:8.45px;color:#3e3e3c;">Contact Name</div>
<div class="t" style="left:30.60px;top:195.00px;font-size:7.9px;line-height:10.27px;color:#1f6fd0;"><span style="text-decoration:underline;text-decoration-color:#a9c8ee;text-underline-offset:1.6px;text-decoration-thickness:0.7px;">Erik Jansen</span></div>
<div class="b" style="left:28.3px;top:205.9px;width:302.09999999999997px;height:0.8px;background:#e5e5e5;"></div>
<svg class="b" style="left:320.09999999999997px;top:195.70000000000002px" width="7.4" height="7.4" viewBox="0 0 10 10"><path d="M0.8 9.2L1.2 7.3 7.6 0.9 9.1 2.4 2.7 8.8z" fill="#d4d2d0"/></svg>
<div class="t" style="left:30.60px;top:210.00px;font-size:6.5px;line-height:8.45px;color:#3e3e3c;">Account Name</div>
<div class="t" style="left:30.60px;top:221.00px;font-size:7.9px;line-height:10.27px;color:#1f6fd0;"><span style="text-decoration:underline;text-decoration-color:#a9c8ee;text-underline-offset:1.6px;text-decoration-thickness:0.7px;">Familie Jansen</span></div>
<div class="b" style="left:28.3px;top:231.8px;width:302.09999999999997px;height:0.8px;background:#e5e5e5;"></div>
<svg class="b" style="left:320.09999999999997px;top:221.60000000000002px" width="7.4" height="7.4" viewBox="0 0 10 10"><path d="M0.8 9.2L1.2 7.3 7.6 0.9 9.1 2.4 2.7 8.8z" fill="#d4d2d0"/></svg>
<div class="t" style="left:30.60px;top:236.00px;font-size:6.5px;line-height:8.45px;color:#3e3e3c;">Type</div>
<div class="b" style="left:28.3px;top:257.4px;width:302.09999999999997px;height:0.8px;background:#e5e5e5;"></div>
<svg class="b" style="left:320.09999999999997px;top:247.2px" width="7.4" height="7.4" viewBox="0 0 10 10"><path d="M0.8 9.2L1.2 7.3 7.6 0.9 9.1 2.4 2.7 8.8z" fill="#d4d2d0"/></svg>
<div class="t" style="left:30.60px;top:261.00px;font-size:6.5px;line-height:8.45px;color:#3e3e3c;">Case Reason</div>
<div class="b" style="left:28.3px;top:282.7px;width:302.09999999999997px;height:0.8px;background:#e5e5e5;"></div>
<svg class="b" style="left:320.09999999999997px;top:272.49999999999994px" width="7.4" height="7.4" viewBox="0 0 10 10"><path d="M0.8 9.2L1.2 7.3 7.6 0.9 9.1 2.4 2.7 8.8z" fill="#d4d2d0"/></svg>
<div class="t" style="left:30.60px;top:291.00px;font-size:6.5px;line-height:8.45px;color:#3e3e3c;">Web Email</div>
<div class="b" style="left:28.3px;top:312.9px;width:302.09999999999997px;height:0.8px;background:#e5e5e5;"></div>
<svg class="b" style="left:320.09999999999997px;top:302.69999999999993px" width="7.4" height="7.4" viewBox="0 0 10 10"><path d="M0.8 9.2L1.2 7.3 7.6 0.9 9.1 2.4 2.7 8.8z" fill="#d4d2d0"/></svg>
<div class="t" style="left:30.60px;top:317.00px;font-size:6.5px;line-height:8.45px;color:#3e3e3c;">Web Name</div>
<div class="b" style="left:28.3px;top:337.8px;width:302.09999999999997px;height:0.8px;background:#e5e5e5;"></div>
<svg class="b" style="left:320.09999999999997px;top:327.59999999999997px" width="7.4" height="7.4" viewBox="0 0 10 10"><path d="M0.8 9.2L1.2 7.3 7.6 0.9 9.1 2.4 2.7 8.8z" fill="#d4d2d0"/></svg>
<div class="t" style="left:30.60px;top:342.00px;font-size:6.5px;line-height:8.45px;color:#3e3e3c;">Date/Time Opened</div>
<div class="t" style="left:30.60px;top:353.00px;font-size:7.9px;line-height:10.27px;color:#080707;">21-04-2020 14:47</div>
<div class="b" style="left:28.3px;top:363.7px;width:302.09999999999997px;height:0.8px;background:#e5e5e5;"></div>
<div class="t" style="left:30.60px;top:372.00px;font-size:6.5px;line-height:8.45px;color:#3e3e3c;">Product</div>
<div class="b" style="left:28.3px;top:393.7px;width:302.09999999999997px;height:0.8px;background:#e5e5e5;"></div>
<svg class="b" style="left:320.09999999999997px;top:383.49999999999994px" width="7.4" height="7.4" viewBox="0 0 10 10"><path d="M0.8 9.2L1.2 7.3 7.6 0.9 9.1 2.4 2.7 8.8z" fill="#d4d2d0"/></svg>
<div class="t" style="left:30.60px;top:398.00px;font-size:6.5px;line-height:8.45px;color:#3e3e3c;">Potential Liability</div>
<div class="b" style="left:28.3px;top:419.5px;width:302.09999999999997px;height:0.8px;background:#e5e5e5;"></div>
<svg class="b" style="left:320.09999999999997px;top:409.29999999999995px" width="7.4" height="7.4" viewBox="0 0 10 10"><path d="M0.8 9.2L1.2 7.3 7.6 0.9 9.1 2.4 2.7 8.8z" fill="#d4d2d0"/></svg>
<div class="t" style="left:30.60px;top:427.00px;font-size:6.5px;line-height:8.45px;color:#3e3e3c;">Created By</div>
<svg class="b" style="left:31.200000000000003px;top:437.3px" width="8.3" height="10.6" viewBox="0 0 32 41"><path d="M4 9l3-7 6 4zM28 9l-3-7-6 4z" fill="#6d86ad"/><path d="M2 22C2 11 8 5 16 5s14 6 14 17c0 9-5 15-14 15S2 31 2 22z" fill="#8fa3c4"/><ellipse cx="16" cy="24" rx="10" ry="8.5" fill="#fff"/><path d="M9 19c3-4 8-5 12-3" stroke="#8fa3c4" stroke-width="2.5" fill="none"/><circle cx="12.5" cy="24" r="1.3" fill="#4a5f85"/><circle cx="20" cy="24" r="1.3" fill="#4a5f85"/><rect x="10" y="34" width="12" height="5" rx="2.5" fill="#6d86ad"/></svg>
<div class="t" style="left:43.00px;top:438.00px;font-size:7.9px;line-height:10.27px;color:#1f6fd0;"><span style="text-decoration:underline;text-decoration-color:#a9c8ee;text-underline-offset:1.6px;text-decoration-thickness:0.7px;">Laurens Wapenaar</span><span style="color:#080707">, 21-04-2020 14:47</span></div>
<div class="b" style="left:28.3px;top:449.5px;width:302.09999999999997px;height:0.8px;background:#e5e5e5;"></div>
<div class="t" style="left:30.60px;top:457.00px;font-size:6.5px;line-height:8.45px;color:#3e3e3c;">Subject</div>
<div class="t" style="left:30.60px;top:468.00px;font-size:7.9px;line-height:10.27px;color:#080707;">Aanvullende donatie</div>
<div class="b" style="left:28.3px;top:478.8px;width:633.7px;height:0.8px;background:#e5e5e5;"></div>
<svg class="b" style="left:651.5px;top:468.59999999999997px" width="7.4" height="7.4" viewBox="0 0 10 10"><path d="M0.8 9.2L1.2 7.3 7.6 0.9 9.1 2.4 2.7 8.8z" fill="#d4d2d0"/></svg>
<div class="t" style="left:30.60px;top:483.00px;font-size:6.5px;line-height:8.45px;color:#3e3e3c;">Description</div>
<div class="t" style="left:30.60px;top:493.00px;font-size:7.75px;line-height:10.08px;color:#080707;">Ik zou graag deze maand een aanvullende donatie willen doen aan uw goede doel.</div>
<svg class="b" style="left:651.5px;top:492.4px" width="7.4" height="7.4" viewBox="0 0 10 10"><path d="M0.8 9.2L1.2 7.3 7.6 0.9 9.1 2.4 2.7 8.8z" fill="#d4d2d0"/></svg>
<div class="t" style="left:362.20px;top:133.00px;font-size:6.5px;line-height:8.45px;color:#3e3e3c;">Status</div>
<div class="t" style="left:362.20px;top:144.00px;font-size:7.9px;line-height:10.27px;color:#080707;">New</div>
<div class="b" style="left:360px;top:155.1px;width:302px;height:0.8px;background:#e5e5e5;"></div>
<svg class="b" style="left:651.5px;top:144.9px" width="7.4" height="7.4" viewBox="0 0 10 10"><path d="M0.8 9.2L1.2 7.3 7.6 0.9 9.1 2.4 2.7 8.8z" fill="#d4d2d0"/></svg>
<div class="t" style="left:362.20px;top:159.00px;font-size:6.5px;line-height:8.45px;color:#3e3e3c;">Priority</div>
<div class="t" style="left:362.20px;top:170.00px;font-size:7.9px;line-height:10.27px;color:#080707;">Medium</div>
<div class="b" style="left:360px;top:180.4px;width:302px;height:0.8px;background:#e5e5e5;"></div>
<svg class="b" style="left:651.5px;top:170.20000000000002px" width="7.4" height="7.4" viewBox="0 0 10 10"><path d="M0.8 9.2L1.2 7.3 7.6 0.9 9.1 2.4 2.7 8.8z" fill="#d4d2d0"/></svg>
<div class="t" style="left:362.20px;top:184.00px;font-size:6.5px;line-height:8.45px;color:#3e3e3c;">Contact Phone</div>
<div class="b" style="left:360px;top:205.9px;width:302px;height:0.8px;background:#e5e5e5;"></div>
<div class="t" style="left:362.20px;top:210.00px;font-size:6.5px;line-height:8.45px;color:#3e3e3c;">Contact Email</div>
<div class="b" style="left:360px;top:231.8px;width:302px;height:0.8px;background:#e5e5e5;"></div>
<div class="t" style="left:362.20px;top:236.00px;font-size:6.5px;line-height:8.45px;color:#3e3e3c;">Case Origin</div>
<div class="t" style="left:362.20px;top:247.00px;font-size:7.9px;line-height:10.27px;color:#080707;">Email</div>
<div class="b" style="left:360px;top:257.4px;width:302px;height:0.8px;background:#e5e5e5;"></div>
<svg class="b" style="left:651.5px;top:247.2px" width="7.4" height="7.4" viewBox="0 0 10 10"><path d="M0.8 9.2L1.2 7.3 7.6 0.9 9.1 2.4 2.7 8.8z" fill="#d4d2d0"/></svg>
<div class="t" style="left:362.20px;top:291.00px;font-size:6.5px;line-height:8.45px;color:#3e3e3c;">Web Company</div>
<div class="b" style="left:360px;top:312.9px;width:302px;height:0.8px;background:#e5e5e5;"></div>
<svg class="b" style="left:651.5px;top:302.69999999999993px" width="7.4" height="7.4" viewBox="0 0 10 10"><path d="M0.8 9.2L1.2 7.3 7.6 0.9 9.1 2.4 2.7 8.8z" fill="#d4d2d0"/></svg>
<div class="t" style="left:362.20px;top:317.00px;font-size:6.5px;line-height:8.45px;color:#3e3e3c;">Web Phone</div>
<div class="b" style="left:360px;top:338.2px;width:302px;height:0.8px;background:#e5e5e5;"></div>
<svg class="b" style="left:651.5px;top:327.99999999999994px" width="7.4" height="7.4" viewBox="0 0 10 10"><path d="M0.8 9.2L1.2 7.3 7.6 0.9 9.1 2.4 2.7 8.8z" fill="#d4d2d0"/></svg>
<div class="t" style="left:362.20px;top:342.00px;font-size:6.5px;line-height:8.45px;color:#3e3e3c;">Date/Time Closed</div>
<div class="b" style="left:360px;top:363.9px;width:302px;height:0.8px;background:#e5e5e5;"></div>
<div class="t" style="left:362.20px;top:372.00px;font-size:6.5px;line-height:8.45px;color:#3e3e3c;">Engineering Req Number</div>
<div class="b" style="left:360px;top:394.3px;width:302px;height:0.8px;background:#e5e5e5;"></div>
<svg class="b" style="left:651.5px;top:384.09999999999997px" width="7.4" height="7.4" viewBox="0 0 10 10"><path d="M0.8 9.2L1.2 7.3 7.6 0.9 9.1 2.4 2.7 8.8z" fill="#d4d2d0"/></svg>
<div class="t" style="left:362.20px;top:398.00px;font-size:6.5px;line-height:8.45px;color:#3e3e3c;">SLA Violation</div>
<div class="b" style="left:360px;top:419.3px;width:302px;height:0.8px;background:#e5e5e5;"></div>
<svg class="b" style="left:651.5px;top:409.09999999999997px" width="7.4" height="7.4" viewBox="0 0 10 10"><path d="M0.8 9.2L1.2 7.3 7.6 0.9 9.1 2.4 2.7 8.8z" fill="#d4d2d0"/></svg>
<div class="t" style="left:362.20px;top:427.00px;font-size:6.5px;line-height:8.45px;color:#3e3e3c;">Last Modified By</div>
<svg class="b" style="left:362.8px;top:436.90000000000003px" width="8.3" height="10.6" viewBox="0 0 32 41"><path d="M4 9l3-7 6 4zM28 9l-3-7-6 4z" fill="#6d86ad"/><path d="M2 22C2 11 8 5 16 5s14 6 14 17c0 9-5 15-14 15S2 31 2 22z" fill="#8fa3c4"/><ellipse cx="16" cy="24" rx="10" ry="8.5" fill="#fff"/><path d="M9 19c3-4 8-5 12-3" stroke="#8fa3c4" stroke-width="2.5" fill="none"/><circle cx="12.5" cy="24" r="1.3" fill="#4a5f85"/><circle cx="20" cy="24" r="1.3" fill="#4a5f85"/><rect x="10" y="34" width="12" height="5" rx="2.5" fill="#6d86ad"/></svg>
<div class="t" style="left:374.60px;top:438.00px;font-size:7.9px;line-height:10.27px;color:#1f6fd0;"><span style="text-decoration:underline;text-decoration-color:#a9c8ee;text-underline-offset:1.6px;text-decoration-thickness:0.7px;">Laurens Wapenaar</span><span style="color:#080707">, 21-04-2020 14:47</span></div>
<div class="b" style="left:360px;top:449.0px;width:302px;height:0.8px;background:#e5e5e5;"></div>
<div class="b" style="left:24.8px;top:182.4px;width:311px;height:24.8px;border:2.1px solid #e8412f;box-sizing:border-box;"></div>
<div class="b" style="left:684px;top:96px;width:326px;height:156.3px;background:#fff;border-radius:2.5px;box-shadow:inset 0 0.8px 0 #e3e2e1, 0 1px 1px rgba(0,0,0,0.08);"></div>
<svg class="b" style="left:693.2px;top:103.1px" width="11.9" height="11.9" viewBox="0 0 12 12"><rect width="12" height="12" rx="2" fill="#34386b"/><circle cx="6" cy="6" r="4" fill="#4fc1b9"/><path d="M7.6 4.6A2 2 0 1 0 7.6 7.4" fill="none" stroke="#fff" stroke-width="1.1"/></svg>
<div class="t" style="left:709.80px;top:106.00px;font-size:9.0px;line-height:11.7px;color:#080707;">Quick Tikkie</div>
<div class="t" style="left:696.00px;top:130.00px;font-size:6.5px;line-height:8.45px;color:#c23934;">*</div>
<div class="t" style="left:699.40px;top:130.00px;font-size:6.55px;line-height:8.52px;color:#3e3e3c;">Contact</div>
<svg class="b" style="left:728px;top:130.2px" width="6.8" height="6.8" viewBox="0 0 10 10"><circle cx="5" cy="5" r="5" fill="#706e6b"/><rect x="4.3" y="4.2" width="1.4" height="3.8" fill="#fff"/><circle cx="5" cy="2.7" r="0.8" fill="#fff"/></svg>
<div class="b" style="left:695.2px;top:139.3px;width:303px;height:16.5px;border:0.8px solid #e2e1e0;border-radius:2.5px;box-sizing:border-box;background:#fff;"></div>
<svg class="b" style="left:697.7px;top:142.7px" width="10.3" height="10.1" viewBox="0 0 10 10"><rect width="10" height="10" rx="1.6" fill="#a094ed"/><rect x="2.4" y="3" width="5.2" height="4" fill="none" stroke="#fff" stroke-width="0.7"/><path d="M3.3 4.3h1.3M3.3 5.6h1.3M5.4 4.3h1.3" stroke="#fff" stroke-width="0.5"/></svg>
<div class="t" style="left:714.60px;top:144.00px;font-size:6.85px;line-height:8.9px;color:#080707;">Erik Jansen</div>
<svg class="b" style="left:987.3px;top:146px" width="5.6" height="5.3" viewBox="0 0 5.6 5.3"><path d="M0.3 0.3L5.3 5M5.3 0.3L0.3 5" stroke="#5c5a58" stroke-width="0.9"/></svg>
<div class="b" style="left:690.4px;top:124.8px;width:311.2px;height:35px;border:2.2px solid #e8412f;box-sizing:border-box;"></div>
<div class="t" style="left:693.00px;top:164.00px;font-size:6.9px;line-height:8.97px;color:#3e3e3c;">Amount</div>
<div class="b" style="left:693.1px;top:173.6px;width:307.8px;height:16.2px;border:0.8px solid #e2e1e0;border-radius:2.5px;box-sizing:border-box;background:#fff;"></div>
<div class="t" style="left:699.50px;top:177.00px;font-size:7.3px;line-height:9.49px;color:#706e6b;">Enter an amount or leave empty for open amount Tikkie</div>
<div class="t" style="left:694.00px;top:194.00px;font-size:6.5px;line-height:8.45px;color:#c23934;">*</div>
<div class="t" style="left:697.80px;top:194.00px;font-size:6.7px;line-height:8.71px;color:#3e3e3c;">Description</div>
<div class="b" style="left:693.1px;top:203.5px;width:307.8px;height:16.3px;border:0.8px solid #e2e1e0;border-radius:2.5px;box-sizing:border-box;background:#fff;"></div>
<div class="t" style="left:699.50px;top:207.00px;font-size:7.2px;line-height:9.36px;color:#706e6b;">Enter a Description for the Tikkie</div>
<div class="b" style="left:935.8px;top:228.9px;width:65.1px;height:16.9px;background:#1b5297;border-radius:2px;"></div>
<div class="t" style="left:944.50px;top:233.00px;font-size:7.2px;line-height:9.36px;color:#ffffff;-webkit-text-stroke:0.25px #fff;">Request Tikkie</div>
<div class="b" style="left:679.7px;top:94px;width:332.8px;height:164.8px;border:2.2px solid #e8412f;box-sizing:border-box;"></div>
<div class="b" style="left:0px;top:499px;width:1016px;height:22px;background:#fff;border-top:1px solid #e3e2e1;box-sizing:border-box;box-shadow:0 -1px 1.5px rgba(0,0,0,0.10);"></div>
<svg class="b" style="left:1019px;top:516px" width="5" height="5" viewBox="0 0 5 5"><circle cx="5" cy="5" r="3.6" fill="#1c1f2a"/></svg>
<svg class="b" style="left:6.6px;top:506.8px" width="6.6" height="6.6" viewBox="0 0 10 10"><circle cx="5" cy="5" r="4.1" fill="none" stroke="#2b2826" stroke-width="1.5"/><path d="M5 2.6V5.2L6.6 6.4" fill="none" stroke="#2b2826" stroke-width="1.1"/></svg>
<div class="t" style="left:18.20px;top:506.00px;font-size:7.0px;line-height:9.1px;color:#3e3e3c;">History</div>
</body></html>
